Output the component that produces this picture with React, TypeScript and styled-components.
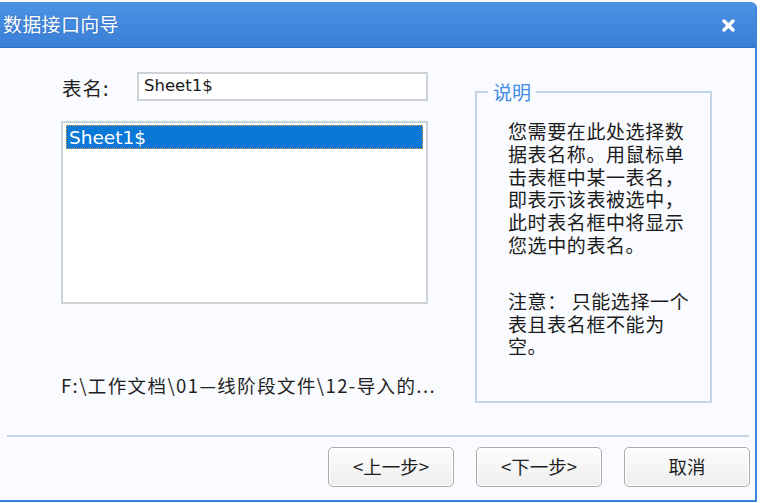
import styled, { createGlobalStyle } from "styled-components";

const GlobalStyle = createGlobalStyle`
  html, body {
    margin: 0;
    padding: 0;
    background: #ffffff;
  }
  body {
    font-family: "Noto Sans CJK SC", "Noto Sans", sans-serif;
    color: #1e1e1e;
  }
`;

const Window = styled.div`
  margin-top: 2px;
  width: 757px;
  height: 500px;
  box-sizing: border-box;
  border-right: 2px solid #3d82dc;
  border-bottom: 2px solid #3d82dc;
  border-top-right-radius: 6px;
  background: #f9fbfe;
  display: flex;
  flex-direction: column;
  overflow: hidden;
`;

const TitleBar = styled.div`
  height: 45px;
  flex: none;
  display: flex;
  align-items: center;
  justify-content: space-between;
  padding: 0 19px 0 3px;
  background: linear-gradient(#4a93e4, #3b7fd7);
  border-bottom: 1px solid #2f6fc6;
`;

const Title = styled.span`
  color: #ffffff;
  font-size: 19px;
  letter-spacing: 0.3px;
  line-height: 1;
  margin-top: -3px;
  text-shadow: 0 0 2px rgba(0, 40, 110, 0.35);
`;

const CloseButton = styled.button`
  border: 0;
  background: none;
  padding: 0;
  width: 16px;
  height: 16px;
  display: flex;
  align-items: center;
  justify-content: center;
  margin-top: 2px;
`;

const Content = styled.div`
  flex: 1;
  display: flex;
  padding: 24px 0 0 61px;
`;

const LeftColumn = styled.div`
  width: 367px;
  display: flex;
  flex-direction: column;
`;

const NameRow = styled.div`
  display: flex;
  align-items: center;
  justify-content: space-between;
  height: 29px;
`;

const Label = styled.span`
  font-size: 19.5px;
  margin: 2px 0 0 1px;
  letter-spacing: 1px;
`;

const NameInput = styled.input`
  width: 291px;
  height: 29px;
  box-sizing: border-box;
  border: 2px solid #cdd2d8;
  background: #ffffff;
  padding: 0 0 2px 5px;
  font-family: "DejaVu Sans", sans-serif;
  font-size: 16.5px;
  color: #1a1a1a;
  outline: none;
`;

const ListBox = styled.div`
  margin-top: 20px;
  height: 183px;
  box-sizing: border-box;
  border: 2px solid #cdd2d8;
  background: #ffffff;
  padding: 2px 3px;
`;

const ListItem = styled.div<{ $selected?: boolean }>`
  height: 24px;
  box-sizing: border-box;
  display: flex;
  align-items: center;
  padding-left: 2px;
  font-family: "DejaVu Sans", sans-serif;
  font-size: 18.5px;
  color: ${(p) => (p.$selected ? "#ffffff" : "#1a1a1a")};
  background: ${(p) => (p.$selected ? "#0a78d6" : "transparent")};
  border: 1px dotted ${(p) => (p.$selected ? "#e8a040" : "transparent")};
`;

const PathText = styled.div`
  margin-top: 68px;
  font-size: 18.5px;
  letter-spacing: 1.4px;
  color: #1e1e1e;
  white-space: nowrap;
`;

const GroupBox = styled.fieldset`
  margin: 9px 0 0 47px;
  width: 237px;
  height: 322px;
  box-sizing: border-box;
  border: 2px solid #c4d4e8;
  padding: 17px 0 0 31px;
`;

const Legend = styled.legend`
  color: #3f8ae4;
  font-size: 19px;
  line-height: 22px;
  padding: 0 5px;
  margin-left: -20px;
`;

const Note = styled.p<{ $gap?: number }>`
  margin: ${(p) => p.$gap ?? 0}px 0 0 0;
  font-size: 19px;
  line-height: 22.8px;
  letter-spacing: 0.6px;
  color: #1a1a1a;
`;

const Separator = styled.div`
  height: 2px;
  margin: 0 6px 0 7px;
  background: #cad6e5;
`;

const ButtonRow = styled.div`
  height: 63px;
  flex: none;
  display: flex;
  justify-content: flex-end;
  gap: 22px;
  padding: 10px 5px 0 0;
  box-sizing: border-box;
`;

const DialogButton = styled.button`
  width: 126px;
  height: 40px;
  border: 1px solid #a9abad;
  border-radius: 5px;
  background: linear-gradient(#fdfdfd, #eeeeee);
  box-shadow: inset 0 0 0 1px #ffffff;
  font-family: "Noto Sans CJK SC", sans-serif;
  font-size: 18.5px;
  color: #1e1e1e;
  padding: 0 0 2px 0;
`;

export default function App() {
  return (
    <>
      <GlobalStyle />
      <Window>
        <TitleBar>
          <Title>数据接口向导</Title>
          <CloseButton aria-label="关闭">
            <svg width="13" height="13" viewBox="0 0 13 13">
              <path
                d="M2 2L11 11M11 2L2 11"
                stroke="#ffffff"
                strokeWidth="3.4"
                strokeLinecap="round"
              />
            </svg>
          </CloseButton>
        </TitleBar>
        <Content>
          <LeftColumn>
            <NameRow>
              <Label>表名:</Label>
              <NameInput defaultValue="Sheet1$" />
            </NameRow>
            <ListBox>
              <ListItem $selected>Sheet1$</ListItem>
            </ListBox>
            <PathText>F:\工作文档\01—线阶段文件\12-导入的...</PathText>
          </LeftColumn>
          <GroupBox>
            <Legend>说明</Legend>
            <Note>
              您需要在此处选择数
              <br />
              据表名称。用鼠标单
              <br />
              击表框中某一表名，
              <br />
              即表示该表被选中，
              <br />
              此时表名框中将显示
              <br />
              您选中的表名。
            </Note>
            <Note $gap={33}>
              注意： 只能选择一个
              <br />
              表且表名框不能为
              <br />
              空。
            </Note>
          </GroupBox>
        </Content>
        <Separator />
        <ButtonRow>
          <DialogButton>&lt;上一步&gt;</DialogButton>
          <DialogButton>&lt;下一步&gt;</DialogButton>
          <DialogButton>取消</DialogButton>
        </ButtonRow>
      </Window>
    </>
  );
}
